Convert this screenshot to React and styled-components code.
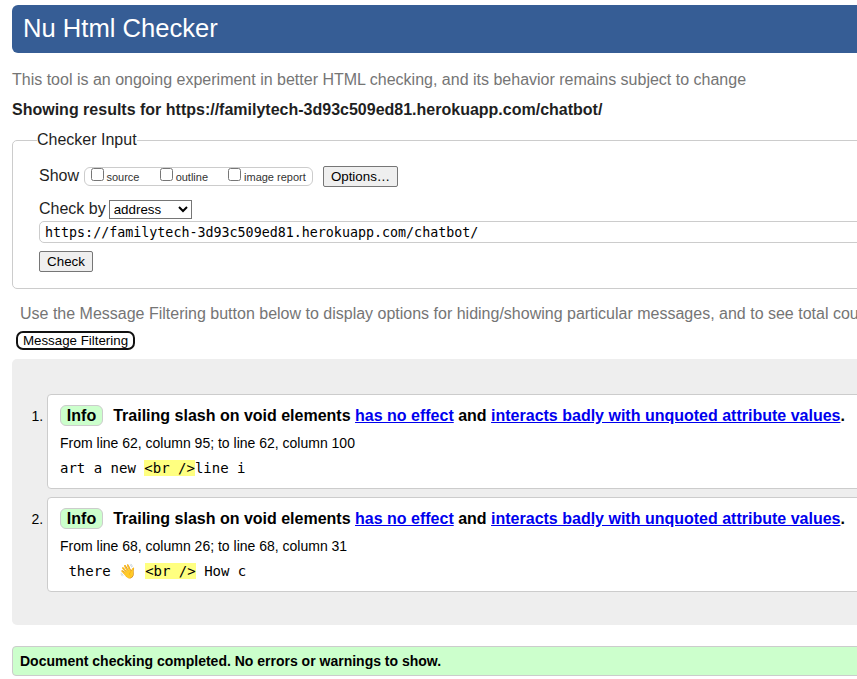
import React from "react";
import styled, { createGlobalStyle } from "styled-components";

const GlobalStyle = createGlobalStyle`
  html, body { margin: 0; background: #fff; overflow: hidden; }
  *, *::before, *::after { box-sizing: border-box; }
`;

const Viewport = styled.div`
  height: 679px;
  overflow: hidden;
`;

const Page = styled.div`
  display: flow-root;
  width: 960px;
  padding: 5px 12px 0;
  font: 16px/20px "Liberation Sans", Arial, sans-serif;
  color: #1f1f1f;
`;

const Banner = styled.h1`
  height: 48px;
  margin: 0 0 17px;
  padding: 0 11px;
  border-radius: 6px;
  background: #365d95;
  color: #fff;
  font-size: 25.6px;
  font-weight: 400;
  line-height: 47px;
`;

const Note = styled.p`
  margin: 0;
  padding-left: ${({ $indent }) => $indent || 0}px;
  color: #757575;
  line-height: 20px;
  white-space: nowrap;
`;

const ResultsHeading = styled.h2`
  margin: 10px 0;
  font-size: 16px;
  line-height: 20px;
`;

const InputPanel = styled.fieldset`
  height: 159px;
  min-width: 0;
  margin: 0 0 15px;
  padding: 16px 26px 0;
  border: 1px solid #ccc;
  border-radius: 5px;
`;

const PanelTitle = styled.legend`
  margin-left: -2px;
  padding: 0;
  line-height: 20px;
`;

const ControlRow = styled.div`
  display: flex;
  align-items: ${({ $align }) => $align};
  height: ${({ $height }) => $height}px;
`;

const Caption = styled.span`
  line-height: 20px;
`;

const ShowOptions = styled.div`
  display: flex;
  align-items: flex-start;
  width: 229px;
  height: 19px;
  margin: 1px 10px 0 5px;
  padding-left: 6px;
  border: 1px solid #ccc;
  border-radius: 6px;
`;

const CheckLabel = styled.label`
  display: flex;
  gap: ${({ $gap }) => $gap}px;
  width: ${({ $width }) => $width};
  color: #333;
  font-size: 11px;
  line-height: 19px;
  white-space: nowrap;
`;

const Checkbox = styled.input`
  width: 13px;
  height: 13px;
  margin: 0;
`;

const Button = styled.button`
  width: ${({ $width }) => $width}px;
  height: 21px;
  margin: 0;
  padding: 0;
  border: 1px solid #767676;
  border-radius: 2px;
  background: #efefef;
  color: #000;
  font: 13.333px "Liberation Sans", Arial, sans-serif;
`;

const FilterButton = styled(Button)`
  display: block;
  height: 19px;
  margin: 7px 0 9px 4px;
  border: 2px solid #111;
  border-radius: 7px;
  background: #fff;
  line-height: 15px;
`;

const MethodSelect = styled.select`
  width: 83px;
  height: 19px;
  margin: 0 0 0 3px;
  border: 1px solid #767676;
  border-radius: 0;
  background: #fff;
  color: #000;
  font: 13.333px "Liberation Sans", Arial, sans-serif;
`;

const AddressField = styled.input`
  display: block;
  width: 100%;
  height: 22px;
  margin: 2px 0 8px;
  padding: 0 5px;
  border: 1px solid #ccc;
  border-radius: 5px;
  color: #000;
  font: 13.333px "DejaVu Sans Mono", monospace;
`;

const Results = styled.ol`
  height: 266px;
  margin: 0 0 21px;
  padding: 35px 0 0 35px;
  border-radius: 5px;
  background: #eee;
  color: #000;
  font-size: 14px;
`;

const Message = styled.li`
  height: 95px;
  margin-bottom: 8px;
  padding: 10px 12px 0;
  border: 1px solid #ccc;
  border-radius: 4px;
  background: #fff;
`;

const MessageTitle = styled.p`
  margin: 0;
  font-size: 16px;
  font-weight: 700;
  line-height: 21px;
  white-space: nowrap;

  a { color: #0000ee; }
`;

const Badge = styled.strong`
  display: inline-block;
  width: 43px;
  height: 21px;
  margin-right: 10.2px;
  border: 1px solid #ccc;
  border-radius: 6px;
  background: #cfc;
  text-align: center;
  line-height: 19px;
`;

const Location = styled.p`
  margin: 7px 0 5px;
  line-height: 20px;
`;

const Extract = styled.code`
  display: block;
  font: 14px/20px "DejaVu Sans Mono", monospace;
  white-space: pre;
`;

const Emoji = styled.span`
  margin-right: 0.7px;
`;

const Highlight = styled.mark`
  background: #ffff80;
  color: inherit;
`;

const Status = styled.p`
  height: 30px;
  margin: 0;
  padding: 0 7px;
  border: 1px solid #ccc;
  border-radius: 4px;
  background: #cfc;
  color: #000;
  font-size: 14px;
  font-weight: 700;
  line-height: 28px;
`;

const reports = [
  { location: "From line 62, column 95; to line 62, column 100", before: "art a new ", after: "line i" },
  {
    location: "From line 68, column 26; to line 68, column 31",
    before: <>{" there "}<Emoji>👋</Emoji>{" "}</>,
    after: " How c",
  },
];

const views = [
  { name: "source", width: "69px", gap: 2.4 },
  { name: "outline", width: "68px", gap: 2.6 },
  { name: "image report", width: "auto", gap: 3 },
];

export default function App() {
  return (
    <Viewport>
      <GlobalStyle />
      <Page>
        <Banner>Nu Html Checker</Banner>
        <Note>This tool is an ongoing experiment in better HTML checking, and its behavior remains subject to change</Note>
        <ResultsHeading>Showing results for https://familytech-3d93c509ed81.herokuapp.com/chatbot/</ResultsHeading>
        <InputPanel>
          <PanelTitle>Checker Input</PanelTitle>
          <ControlRow $height={21} $align="flex-start">
            <Caption>Show</Caption>
            <ShowOptions>
              {views.map(({ name, width, gap }) => (
                <CheckLabel key={name} $width={width} $gap={gap}>
                  <Checkbox type="checkbox" />
                  {name}
                </CheckLabel>
              ))}
            </ShowOptions>
            <Button $width={75}>Options…</Button>
          </ControlRow>
          <ControlRow $height={32} $align="flex-end">
            <Caption>Check by</Caption>
            <MethodSelect defaultValue="address">
              <option value="address">address</option>
              <option>file upload</option>
              <option>text input</option>
            </MethodSelect>
          </ControlRow>
          <AddressField defaultValue="https://familytech-3d93c509ed81.herokuapp.com/chatbot/" spellCheck={false} />
          <Button $width={54}>Check</Button>
        </InputPanel>
        <Note $indent={8}>
          Use the Message Filtering button below to display options for hiding/showing particular messages, and to see total counts
        </Note>
        <FilterButton $width={119}>Message Filtering</FilterButton>
        <Results>
          {reports.map(({ location, before, after }) => (
            <Message key={location}>
              <MessageTitle>
                <Badge>Info</Badge>
                Trailing slash on void elements <a href="#effect">has no effect</a> and{" "}
                <a href="#unquoted">interacts badly with unquoted attribute values</a>.
              </MessageTitle>
              <Location>{location}</Location>
              <Extract>
                {before}
                <Highlight>{"<br />"}</Highlight>
                {after}
              </Extract>
            </Message>
          ))}
        </Results>
        <Status>Document checking completed. No errors or warnings to show.</Status>
      </Page>
    </Viewport>
  );
}
